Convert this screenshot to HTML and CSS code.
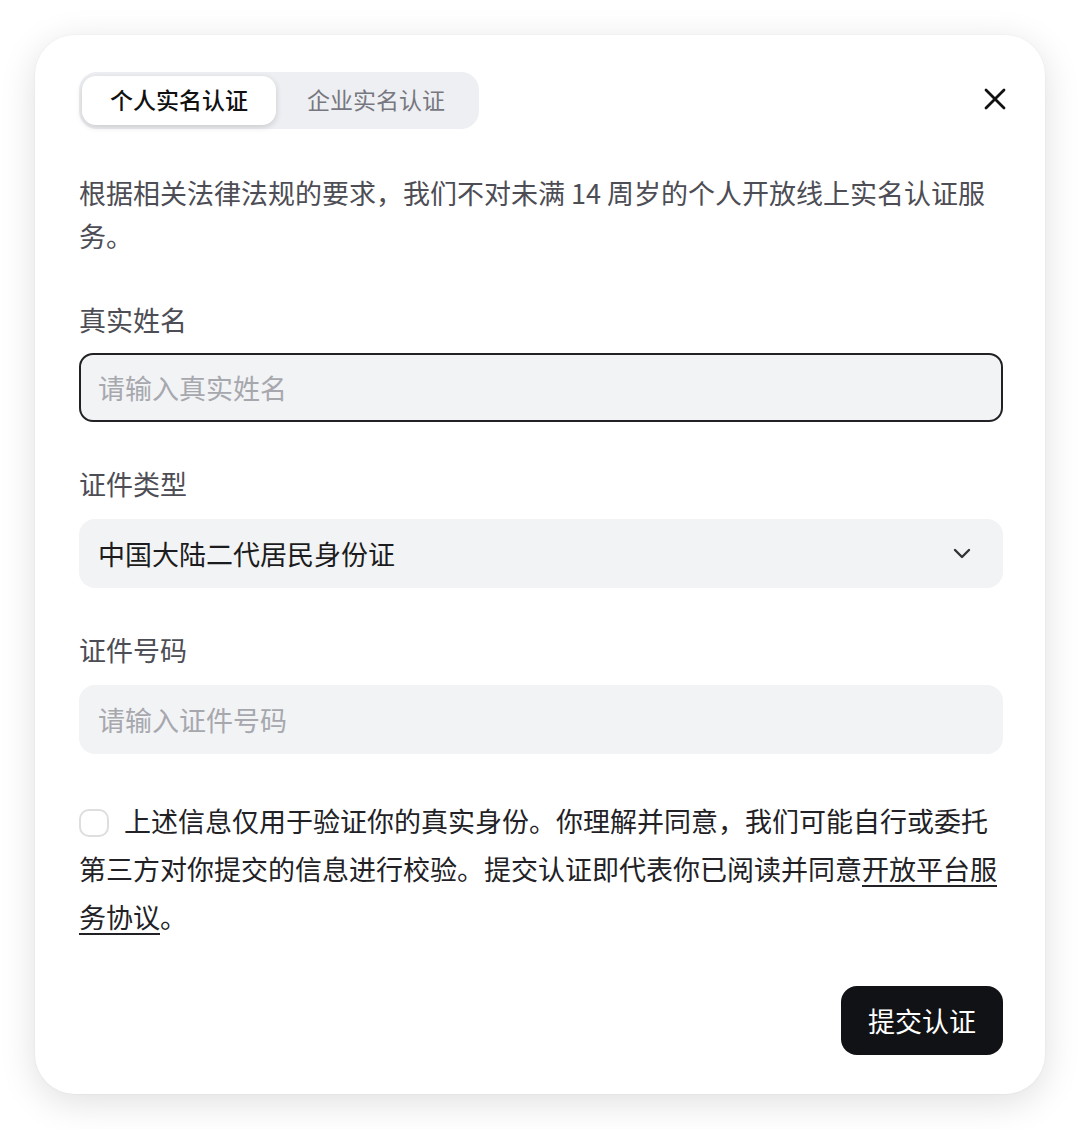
FILE: index.html
```html
<!DOCTYPE html>
<html lang="zh-CN">
<head>
<meta charset="utf-8">
<title>实名认证</title>
<link rel="stylesheet" href="styles.css">
</head>
<body>
<div class="modal">
  <div class="header">
    <div class="tabs">
      <div class="tab active">个人实名认证</div>
      <div class="tab">企业实名认证</div>
    </div>
    <button class="close" aria-label="关闭">
      <svg width="22" height="22" viewBox="0 0 22 22"><path d="M2 2 L20 20 M20 2 L2 20" stroke="#111" stroke-width="2.8" stroke-linecap="round" fill="none"/></svg>
    </button>
  </div>
  <p class="desc">根据相关法律法规的要求，我们不对未满 14 周岁的个人开放线上实名认证服务。</p>

  <div class="field">
    <div class="label">真实姓名</div>
    <div class="input focused"><span class="placeholder">请输入真实姓名</span></div>
  </div>
  <div class="field">
    <div class="label">证件类型</div>
    <div class="input select"><span class="value">中国大陆二代居民身份证</span>
      <svg class="chev" width="18" height="11" viewBox="0 0 18 11"><path d="M2 2 L9 9 L16 2" stroke="#333" stroke-width="2.4" stroke-linecap="round" stroke-linejoin="round" fill="none"/></svg>
    </div>
  </div>
  <div class="field">
    <div class="label">证件号码</div>
    <div class="input"><span class="placeholder">请输入证件号码</span></div>
  </div>

  <p class="agree"><span class="checkbox"></span>上述信息仅用于验证你的真实身份。你理解并同意，我们可能自行或委托第三方对你提交的信息进行校验。提交认证即代表你已阅读并同意<a class="link">开放平台服务协议</a>。</p>

  <div class="actions">
    <button class="submit">提交认证</button>
  </div>
</div>
</body>
</html>
```

FILE: styles.css
```css
html, body {
  margin: 0;
  padding: 0;
  background: #ffffff;
}
body {
  font-family: "Noto Sans CJK SC", "Noto Sans", sans-serif;
  color: #1f1f24;
  padding: 35px;
}
.modal {
  width: 1010px;
  box-sizing: border-box;
  background: #ffffff;
  border-radius: 40px;
  padding: 37px 42px 39px 44px;
  box-shadow: 0 8px 36px rgba(0, 0, 0, 0.13), 0 0 0 1px rgba(0,0,0,0.02);
}
.header {
  display: flex;
  justify-content: space-between;
  align-items: center;
}
.tabs {
  display: flex;
  align-items: center;
  width: 400px;
  height: 57px;
  box-sizing: border-box;
  padding: 4px 3px;
  background: #eeeff2;
  border-radius: 18px;
}
.tab {
  flex: 0 0 auto;
  width: 194px;
  height: 49px;
  display: flex;
  align-items: center;
  justify-content: center;
  font-size: 23px;
  line-height: 1;
  padding-bottom: 3px;
  box-sizing: border-box;
  color: #77777f;
  border-radius: 14px;
}
.tab + .tab {
  flex: 1 1 auto;
}
.tab.active {
  background: #ffffff;
  color: #111;
  font-weight: 500;
  box-shadow: 0 2px 6px rgba(0, 0, 0, 0.16);
}
.close {
  border: 0;
  background: none;
  padding: 0;
  margin-right: -3px;
  margin-top: -4px;
  width: 22px;
  height: 22px;
  display: flex;
}
.desc {
  margin: 42px 0 0;
  font-size: 27px;
  line-height: 43px;
  color: #4d4d55;
}
.field {
  margin-top: 43px;
}
.field + .field {
  margin-top: 42px;
}
.label {
  font-size: 27px;
  line-height: 40px;
  color: #4d4d55;
  margin-bottom: 13px;
}
.field + .field .label {
  margin-bottom: 15px;
}
.input {
  height: 69px;
  box-sizing: border-box;
  background: #f2f3f5;
  border-radius: 16px;
  padding: 0 17px;
  display: flex;
  align-items: center;
  font-size: 27px;
  border: 2px solid transparent;
}
.input.focused {
  border-color: #222226;
  border-radius: 14px;
}
.placeholder {
  color: #a7a8ae;
}
.value {
  color: #1c1c20;
  flex: 1;
}
.select {
  padding-right: 30px;
}
.agree {
  margin: 43px 0 0;
  font-size: 27px;
  line-height: 48px;
  color: #222226;
}
.checkbox {
  display: inline-block;
  width: 30px;
  height: 28px;
  box-sizing: border-box;
  border: 2px solid #dedee1;
  border-radius: 10px;
  vertical-align: -5px;
  margin-right: 15px;
  background: #fff;
}
.link {
  color: #222226;
  text-decoration: underline;
  text-underline-offset: 5px;
  text-decoration-thickness: 2px;
}
.actions {
  margin-top: 45px;
  display: flex;
  justify-content: flex-end;
}
.submit {
  width: 162px;
  height: 69px;
  border: 0;
  border-radius: 16px;
  background: #111215;
  color: #ffffff;
  font-family: "Noto Sans CJK SC", sans-serif;
  font-size: 27px;
}
```
